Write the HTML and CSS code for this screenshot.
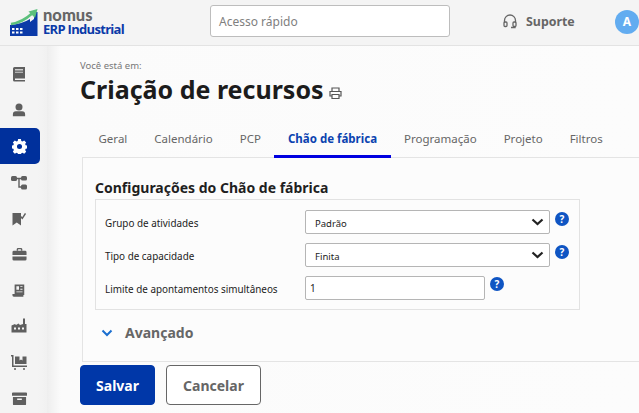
FILE: index.html
```html
<!DOCTYPE html>
<html lang="pt-BR">
<head>
<meta charset="utf-8">
<title>Criação de recursos</title>
<link rel="stylesheet" href="styles.css">
</head>
<body>
<header class="topbar">
  <div class="logo">
    <svg class="logo-mark" width="28" height="27" viewBox="0 0 28 27">
      <path d="M0 16 Q12 15 20 10 L20 13 L24 10 V3 H27.500 V27 H0Z" fill="#0b3aa8"/>
      <path d="M1 15 C9 14 15 11 22 4.500" fill="none" stroke="#5cc07c" stroke-width="2.600"/>
      <path d="M18.500 2.500 L27.500 0 L25 9Z" fill="#5cc07c"/>
      <path d="M2 19h2.500v2H2zM6 19h2.500v2H6zM10 19h2.500v2H10zM2 22.500h2.500v2H2zM6 22.500h2.500v2H6zM10 22.500h2.500v2H10z" fill="#fff"/>
    </svg>
    <div class="logo-text"><span class="logo-nomus">nomus</span><span class="logo-erp">ERP Industrial</span></div>
  </div>
  <div class="quick">Acesso rápido</div>
  <div class="support">
    <svg width="14" height="15" viewBox="0 0 14 15" fill="none" stroke="#666" stroke-width="1.300"><path d="M1.500 9V6.500a5.500 5.500 0 0 1 11 0V9"/><rect x="1" y="8" width="3" height="4.500" rx="1"/><rect x="10" y="8" width="3" height="4.500" rx="1"/><path d="M12 12.500v1H8"/></svg>
    <span>Suporte</span>
  </div>
  <div class="avatar">A</div>
</header>
<div class="body">
  <nav class="side">
    <a class="side-item"><svg width="14" height="16" viewBox="0 0 14 16"><path d="M1 2.500A1.500 1.500 0 0 1 2.500 1H13v11.500H3v1.500h10V15.500H2.500A1.500 1.500 0 0 1 1 14Z" fill="#5f5f5f"/><path d="M3 3h8v1.500H3zM3 5.800h8v1H3z" fill="#fff" opacity=".7"/></svg></a>
    <a class="side-item"><svg width="14" height="14" viewBox="0 0 16 16" fill="#5f5f5f"><circle cx="8" cy="4.500" r="4"/><path d="M1 15v-2a3.500 3.500 0 0 1 3.500-3.500h7A3.500 3.500 0 0 1 15 13v2Z"/></svg></a>
    <a class="side-item active"><svg width="15" height="15" viewBox="0 0 16 16"><path fill="#fff" fill-rule="evenodd" d="M6.500 0h3l.4 2 1.300.6 1.800-1.100 2.100 2.100-1.100 1.800.6 1.300 2 .4v3l-2 .4-.6 1.300 1.100 1.800-2.100 2.100-1.800-1.100-1.300.6-.4 2h-3l-.4-2-1.300-.6-1.800 1.100-2.100-2.100 1.100-1.800-.6-1.300-2-.4v-3l2-.4.6-1.300-1.100-1.800 2.100-2.100 1.800 1.100 1.300-.6ZM8 5.300a2.700 2.700 0 1 0 0 5.400 2.700 2.700 0 0 0 0-5.400Z"/></svg></a>
    <a class="side-item"><svg width="16" height="15" viewBox="0 0 16 15" fill="#5f5f5f"><rect x="0" y="1" width="6" height="5" rx="1.500"/><rect x="10" y="1" width="6" height="4.500" rx="1.500"/><rect x="10" y="9.500" width="6" height="5" rx="1.500"/><path d="M5 2.800h6v1.400H8.700V11.300H11v1.400H7.300V4.200H5z"/></svg></a>
    <a class="side-item"><svg width="14" height="15" viewBox="0 0 14 15" fill="#5f5f5f"><path d="M0.500 2h8.500v12.500L4.750 11.500.5 14.500Z"/><path d="M8.500 5.500l1.800 1.800L13.500 2.500" fill="none" stroke="#5f5f5f" stroke-width="1.500"/></svg></a>
    <a class="side-item"><svg width="15" height="15" viewBox="0 0 16 16" fill="#5f5f5f"><path d="M5 4V2.500A1.500 1.500 0 0 1 6.500 1h3A1.500 1.500 0 0 1 11 2.500V4h-1.500V2.500h-3V4Z"/><path d="M0.500 5.500A1.500 1.500 0 0 1 2 4h12a1.500 1.500 0 0 1 1.500 1.500V8.500h-15Z"/><path d="M0.500 10h15v3A1.500 1.500 0 0 1 14 14.500H2A1.500 1.500 0 0 1 .5 13Z"/></svg></a>
    <a class="side-item"><svg width="14" height="15" viewBox="0 0 16 16" fill="#5f5f5f"><path fill-rule="evenodd" d="M3 1h11v12h-1v2H2a1.500 1.500 0 0 1-1.500-1.500V12H3ZM5 3v4h3V3ZM9.500 3v1H12V3ZM9.500 6v1H12V6ZM5 9v1h7V9Z"/></svg></a>
    <a class="side-item"><svg width="16" height="16" viewBox="0 0 16 16" fill="#5f5f5f"><path fill-rule="evenodd" d="M12 .5h2V6h1.500v8.500H.5V7.500L4 6l1 1 2.500-1.500L9 7l3-1ZM3 9.500v2h2v-2ZM7 9.500v2h2v-2ZM11 9.500v2h2v-2Z"/></svg></a>
    <a class="side-item"><svg width="16" height="16" viewBox="0 0 16 16" fill="#5f5f5f"><path d="M0 1h2.500v10.500H16V13H1V2.500H0Z"/><path d="M4 2.500h4.500v4l1.500-1 1.500 1v-4H15.500V10H4Z"/><circle cx="4" cy="15" r="1"/><circle cx="13" cy="15" r="1"/></svg></a>
    <a class="side-item"><svg width="15" height="15" viewBox="0 0 16 16" fill="#5f5f5f"><path d="M1 1.500h14a1 1 0 0 1 1 1V5H0V2.500a1 1 0 0 1 1-1Z"/><path fill-rule="evenodd" d="M1 6.500h14V14a1 1 0 0 1-1 1H2a1 1 0 0 1-1-1ZM5.500 8v1.500h5V8Z"/></svg></a>
  </nav>
  <main class="main">
    <div class="crumb">Você está em:</div>
    <div class="title-row">
      <h1>Criação de recursos</h1>
      <svg class="print" width="13" height="12" viewBox="0 0 13 12" fill="none" stroke="#555" stroke-width="1.200"><path d="M3 4V1h7v3M3 9H1V4.500h11V9h-2"/><path d="M3 7.500h7v4H3z"/></svg>
    </div>
    <div class="tabs">
      <a class="tab">Geral</a>
      <a class="tab">Calendário</a>
      <a class="tab">PCP</a>
      <a class="tab on">Chão de fábrica</a>
      <a class="tab">Programação</a>
      <a class="tab">Projeto</a>
      <a class="tab">Filtros</a>
    </div>
    <section class="panel">
      <h2>Configurações do Chão de fábrica</h2>
      <div class="fields">
        <div class="row">
          <label>Grupo de atividades</label>
          <div class="select">Padrão<svg width="13" height="8" viewBox="0 0 13 8" fill="none" stroke="#222" stroke-width="2.200"><path d="M1.500 1.500 6.500 6l5-4.500"/></svg></div>
          <span class="help">?</span>
        </div>
        <div class="row">
          <label>Tipo de capacidade</label>
          <div class="select">Finita<svg width="13" height="8" viewBox="0 0 13 8" fill="none" stroke="#222" stroke-width="2.200"><path d="M1.500 1.500 6.500 6l5-4.500"/></svg></div>
          <span class="help">?</span>
        </div>
        <div class="row">
          <label>Limite de apontamentos simultâneos</label>
          <div class="input">1</div>
          <span class="help">?</span>
        </div>
      </div>
      <div class="advanced">
        <svg width="12" height="8" viewBox="0 0 12 8" fill="none" stroke="#1b6fd0" stroke-width="2"><path d="M1.500 1.500 6 6l4.500-4.500"/></svg>
        <span>Avançado</span>
      </div>
    </section>
    <div class="actions">
      <button class="btn primary">Salvar</button>
      <button class="btn">Cancelar</button>
    </div>
  </main>
</div>
</body>
</html>
```
FILE: styles.css
```css
* { box-sizing: border-box; }
html, body { margin: 0; height: 100%; overflow: hidden; }
body { font-family: "Noto Sans", "Open Sans", sans-serif; background: #fff; color: #222; width: 639px; height: 413px; }
.topbar { height: 46px; background: #f4f4f4; border-bottom: 1px solid #e3e3e3; display: flex; align-items: center; }
.logo { display: flex; align-items: flex-end; margin-left: 10px; width: 200px; height: 28px; margin-top: -1px; }
.logo-mark { flex: none; margin-right: 5px; }
.logo-text { display: flex; flex-direction: column; }
.logo-nomus { font-size: 16.500px; font-weight: 900; color: #666; font-family: "Lato", sans-serif; line-height: 14px; }
.logo-erp { font-size: 13px; font-weight: 700; color: #0b3aa8; line-height: 14px; letter-spacing: -.7px; font-family: "Open Sans", sans-serif; }
.quick { width: 240px; height: 32px; background: #fff; border: 1px solid #bdbdbd; border-radius: 3px; font-size: 12px; color: #808080; padding: 0 8px; line-height: 31px; margin-top: -3px; }
.support { display: flex; align-items: center; gap: 9px; font-size: 12.400px; font-weight: 700; color: #666; margin-left: 53px; margin-top: -2px; }
.avatar { width: 24px; height: 24px; border-radius: 50%; background: #62acf0; color: #fff; font-weight: 700; font-size: 12px; text-align: center; line-height: 24px; margin-left: 40px; margin-top: -2px; flex: none; }
.body { display: flex; height: 367px; }
.side { width: 47px; flex: none; background: linear-gradient(90deg, #f4f4f4 80%, #f1f1f1); display: flex; flex-direction: column; padding-top: 10px; }
.side-item { width: 40px; height: 36px; padding-right: 2px; display: flex; align-items: center; justify-content: center; flex: none; }
.side-item.active { background: #00309c; border-radius: 0 5px 5px 0; }
.main { flex: 1; min-width: 0; background: linear-gradient(90deg, #eeeeee 0, #fbfbfb 14px, #fcfcfc); padding: 13px 0 0 33px; }
.crumb { font-size: 9.500px; color: #777; line-height: 13px; }
.title-row { display: flex; align-items: center; gap: 5px; height: 33px; margin-top: 1px; }
h1 { margin: 0; font-size: 25px; font-weight: 700; color: #1c1c1c; line-height: 33px; white-space: nowrap; }
.print { margin-top: 7px; }
.tabs { display: flex; margin: 19px 0 0 5px; height: 33px; white-space: nowrap; position: relative; z-index: 1; }
.tab { padding: 0 13.500px; font-size: 11.500px; color: #666; line-height: 28px; height: 33px; flex: none; }
.tab.on { color: #0b43b0; font-weight: 700; border-bottom: 3px solid #0000e0; }
.panel { margin: -1px 0 0 2px; height: 205px; border: 1px solid #e4e4e4; border-right: 0; padding: 20px 0 0 12px; width: 560px; background: #fcfcfc; }
h2 { margin: 0; font-size: 14px; font-weight: 700; color: #1f1f1f; line-height: 19px; }
.fields { width: 485px; height: 111px; margin-top: 2px; border: 1px solid #e2e2e2; padding: 10px 0 0 9px; display: flex; flex-direction: column; gap: 10px; }
.row { display: flex; align-items: flex-start; height: 23px; }
.row label { width: 200px; flex: none; font-size: 9.900px; color: #222; line-height: 27px; white-space: nowrap; }
.select { width: 245px; height: 24px; background: #fff; border: 1px solid #b5b5b5; border-radius: 2px; font-size: 9.500px; line-height: 18px; padding: 4px 5px 0 9px; display: flex; align-items: center; justify-content: space-between; }
.select svg { margin-bottom: 4px; }
.input { width: 180px; height: 24px; background: #fff; border: 1px solid #b5b5b5; border-radius: 2px; font-size: 10px; line-height: 22px; padding: 0 4px; }
.help { width: 14px; height: 14px; border-radius: 50%; background: #0f55c3; color: #fff; font-size: 10px; font-weight: 700; line-height: 14px; text-align: center; margin: 2px 0 0 5px; flex: none; }
.input + .help { margin-top: 1px; }
.advanced { display: flex; align-items: center; gap: 12px; margin: 13px 0 0 6px; font-size: 14px; font-weight: 700; color: #666; }
.actions { display: flex; gap: 11px; margin-top: 3px; }
.btn { height: 40px; width: 95px; border: 1px solid #666; border-radius: 4px; background: #fff; font: 700 14px "Noto Sans", sans-serif; color: #666; padding: 0; }
.btn.primary { width: 75px; background: #0037a8; border-color: #0037a8; color: #fff; }
```
